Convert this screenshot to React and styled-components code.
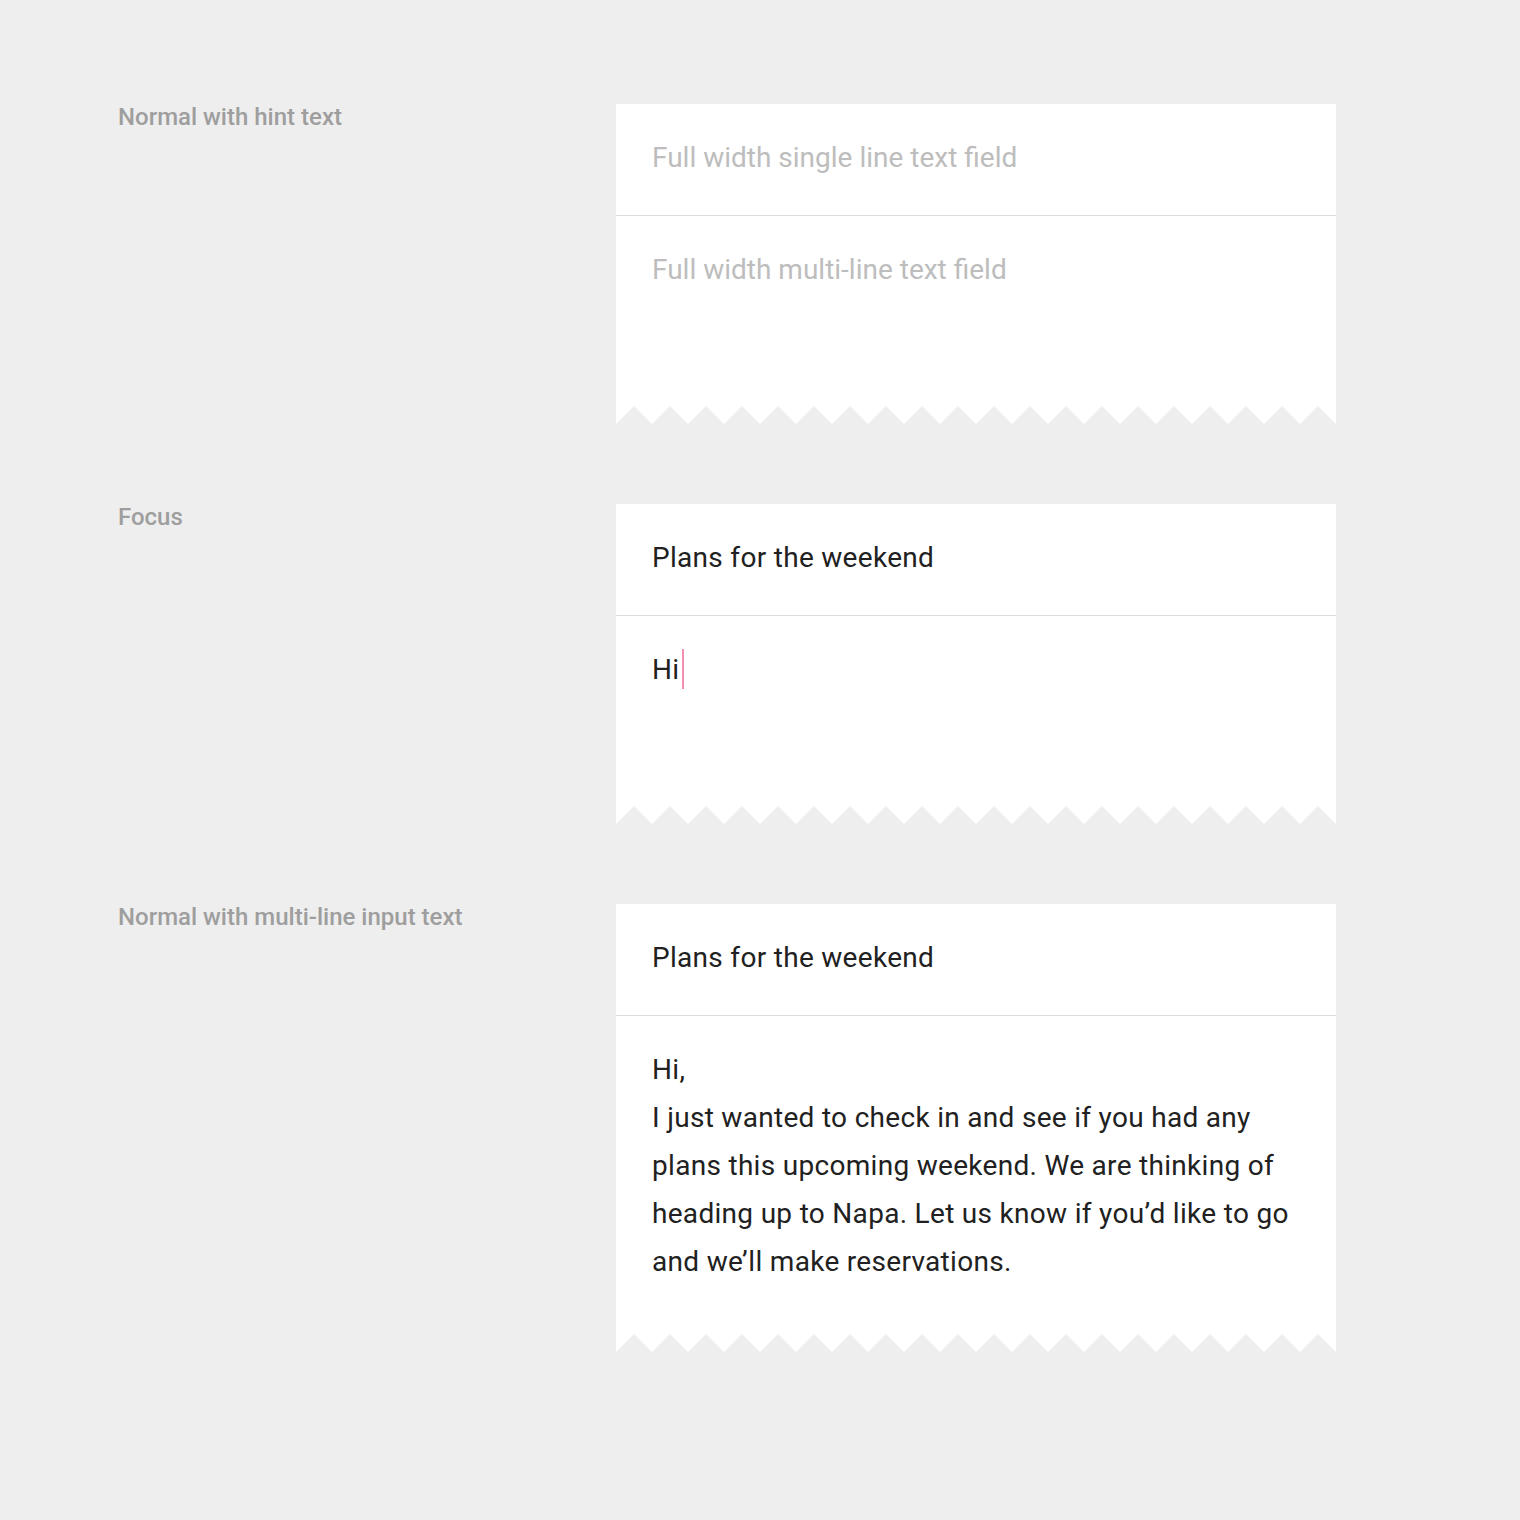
import React from "react";
import styled, { createGlobalStyle } from "styled-components";

const GlobalStyle = createGlobalStyle`
  html, body {
    margin: 0;
    background: #eeeeee;
  }
  body {
    font-family: Roboto, "Noto Sans", "Liberation Sans", sans-serif;
  }
`;

const Page = styled.div`
  min-height: 1520px;
  padding: 104px 0 0 118px;
  box-sizing: border-box;
  display: flex;
  flex-direction: column;
  gap: 80px;
`;

const Section = styled.section`
  display: grid;
  grid-template-columns: 498px 720px;
`;

const Label = styled.div`
  font-size: 24px;
  line-height: 26px;
  font-weight: 500;
  color: #9e9e9e;
`;

const Card = styled.div`
  width: 720px;
  display: flex;
  flex-direction: column;
`;

const fieldText = (p) => `
  font-size: 28px;
  line-height: 48px;
  color: ${p.hint ? "#bdbdbd" : "#212121"};
  letter-spacing: ${p.hint ? "0" : "0.3px"};
`;

const SingleField = styled.div`
  background: #fff;
  height: 112px;
  box-sizing: border-box;
  padding: 30px 36px 0;
  border-bottom: 1px solid #dcdcdc;
  ${fieldText}
`;

const MultiField = styled.div`
  background: #fff;
  min-height: 190px;
  box-sizing: border-box;
  padding: 30px 36px 48px;
  ${fieldText}
`;

const Caret = styled.span`
  display: inline-block;
  width: 2px;
  height: 40px;
  margin-left: 3px;
  vertical-align: -10px;
  background: #f48fb1;
`;

const TearSvg = styled.svg`
  display: block;
  width: 720px;
  height: 18px;
`;

const tearPoints = (() => {
  const pts = ["0,0", "0,18"];
  for (let x = 0; x < 720; x += 36) {
    pts.push(`${x + 18},0`, `${x + 36},18`);
  }
  pts.push("720,0");
  return pts.join(" ");
})();

const Tear = () => (
  <TearSvg viewBox="0 0 720 18">
    <polygon points={tearPoints} fill="#fff" />
  </TearSvg>
);

export default function App() {
  return (
    <>
      <GlobalStyle />
      <Page>
        <Section>
          <Label>Normal with hint text</Label>
          <Card>
            <SingleField hint>Full width single line text field</SingleField>
            <MultiField hint>Full width multi-line text field</MultiField>
            <Tear />
          </Card>
        </Section>

        <Section>
          <Label>Focus</Label>
          <Card>
            <SingleField>Plans for the weekend</SingleField>
            <MultiField>
              Hi<Caret />
            </MultiField>
            <Tear />
          </Card>
        </Section>

        <Section>
          <Label>Normal with multi-line input text</Label>
          <Card>
            <SingleField>Plans for the weekend</SingleField>
            <MultiField>
              Hi,
              <br />
              I just wanted to check in and see if you had any
              <br />
              plans this upcoming weekend. We are thinking of
              <br />
              heading up to Napa. Let us know if you’d like to go
              <br />
              and we’ll make reservations.
            </MultiField>
            <Tear />
          </Card>
        </Section>
      </Page>
    </>
  );
}
